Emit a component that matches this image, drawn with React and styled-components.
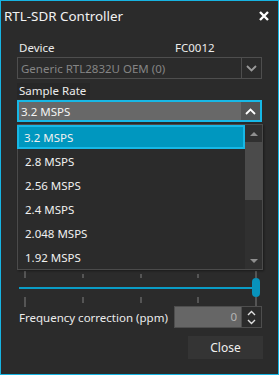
import React from "react"
import styled, { createGlobalStyle } from "styled-components"

const GlobalStyle = createGlobalStyle`
  html, body {
    margin: 0;
    padding: 0;
    background: #2b2b2b;
  }
  * { box-sizing: border-box; }
`;

const Window = styled.div`
  width: 279px;
  height: 375px;
  border: 1px solid #17b4e2;
  background: #2b2b2b;
  color: #ececec;
  font-family: "Noto Sans", "Open Sans", sans-serif;
  font-size: 11.5px;
  display: flex;
  flex-direction: column;
  white-space: nowrap;
`;

const TitleBar = styled.div`
  height: 30px;
  display: flex;
  align-items: center;
  justify-content: space-between;
  padding: 0 9px 0 3px;
`;

const Title = styled.div`
  font-size: 13.4px;
  color: #f2f2f2;
`;

const CloseIcon = styled.svg`
  width: 10px;
  height: 10px;
`;

const Content = styled.div`
  padding: 9px 16px 0 16px;
  display: flex;
  flex-direction: column;
`;

const LabelRow = styled.div`
  display: flex;
  height: 16px;
  line-height: 16px;
  margin-top: ${p => p.$gap || 0}px;
`;

const Label = styled.div`
  padding-left: 2px;
  width: ${p => p.$w ? p.$w + "px" : "auto"};
  background: ${p => p.$shade ? "#272727" : "transparent"};
  padding-right: ${p => p.$shade ? "4px" : "0"};
`;

const ComboWrap = styled.div`
  position: relative;
  margin-top: 1px;
`;

const Combo = styled.div`
  height: 22px;
  display: flex;
  border: ${p => p.$focus ? "2px solid #17b8e6" : "1px solid #4e4e4e"};
  background: ${p => p.$focus ? "#686868" : "transparent"};
`;

const ComboText = styled.div`
  flex: 1;
  display: flex;
  align-items: center;
  padding-left: ${p => p.$focus ? "2px" : "3px"};
  color: ${p => p.$focus ? "#f4f4f4" : "#858585"};
`;

const ComboButton = styled.div`
  width: ${p => p.$focus ? "19px" : "20px"};
  display: flex;
  align-items: center;
  justify-content: center;
  border-left: ${p => p.$focus ? "none" : "1px solid #4e4e4e"};
  background: ${p => p.$focus ? "#545454" : "transparent"};
`;

const Chevron = styled.svg`
  width: 11px;
  height: 7px;
`;

const List = styled.div`
  position: absolute;
  top: 24px;
  left: 0;
  width: 246px;
  height: 146px;
  border: 1px solid #4b4b4b;
  background: #2b2b2b;
  display: flex;
  z-index: 2;
  box-shadow: 1px 1px 2px rgba(0, 0, 0, 0.4);
`;

const Items = styled.div`
  flex: 1;
  display: flex;
  flex-direction: column;
`;

const Item = styled.div`
  height: 24px;
  display: flex;
  align-items: center;
  padding-left: ${p => p.$active ? "5px" : "7px"};
  border: ${p => p.$active ? "2px solid #17b8e6" : "none"};
  background: ${p => p.$active ? "#0097bf" : "transparent"};
  color: #f0f0f0;
  margin-left: ${p => p.$active ? "-1px" : "0"};
`;

const ScrollBar = styled.div`
  width: 17px;
  display: flex;
  flex-direction: column;
  background: #303030;
`;

const ScrollArrow = styled.div`
  height: 17px;
  display: flex;
  align-items: center;
  justify-content: center;
`;

const ScrollThumb = styled.div`
  height: 58px;
  background: #4b4b4b;
`;

const ScrollTrack = styled.div`
  flex: 1;
`;

const Triangle = styled.div`
  width: 0;
  height: 0;
  border-left: 4px solid transparent;
  border-right: 4px solid transparent;
  ${p => p.$down
    ? "border-top: 4px solid #8f8f8f;"
    : "border-bottom: 4px solid #8f8f8f;"}
`;

const HiddenArea = styled.div`
  height: 148px;
`;

const Slider = styled.div`
  display: flex;
  flex-direction: column;
`;

const TickRow = styled.div`
  height: ${p => p.$h}px;
  display: flex;
  justify-content: space-between;
  align-items: ${p => p.$top ? "flex-end" : "flex-start"};
  padding: 0 5px 0 7px;
`;

const Tick = styled.div`
  width: 2px;
  height: ${p => p.$h}px;
  background: #555555;
`;

const TrackRow = styled.div`
  height: 19px;
  display: flex;
  align-items: center;
  padding: 0 2px;
`;

const Track = styled.div`
  flex: 1;
  height: 2px;
  background: #0a9cc6;
  margin-right: -1px;
`;

const Thumb = styled.div`
  width: 8px;
  height: 19px;
  border-radius: 4px;
  background: #0893bc;
`;

const FieldRow = styled.div`
  display: flex;
  align-items: center;
  justify-content: space-between;
  height: 22px;
`;

const SpinBox = styled.div`
  width: 88px;
  height: 22px;
  display: flex;
  border: 1px solid #4e4e4e;
  background: #666666;
`;

const SpinValue = styled.div`
  flex: 1;
  text-align: right;
  padding-right: 4px;
  line-height: 20px;
  color: #b4b4b4;
`;

const SpinButtons = styled.div`
  width: 20px;
  border-left: 1px solid #4e4e4e;
  background: #2b2b2b;
  display: flex;
  flex-direction: column;
  align-items: center;
  justify-content: space-around;
  padding: 1px 0;
`;

const SpinIcon = styled.svg`
  width: 9px;
  height: 6px;
`;

const ButtonRow = styled.div`
  display: flex;
  justify-content: flex-end;
  margin-top: 8px;
  margin-right: -1px;
`;

const Button = styled.button`
  width: 75px;
  height: 23px;
  border: none;
  background: #343434;
  color: #f0f0f0;
  font-family: inherit;
  font-size: 12px;
  padding: 0;
`;

const ChevronDown = ({ color }) => (
  <Chevron viewBox="0 0 11 7">
    <polyline points="1,1 5.5,5.5 10,1" fill="none" stroke={color} strokeWidth="1.8" />
  </Chevron>
);

const ChevronUp = ({ color }) => (
  <Chevron viewBox="0 0 11 7">
    <polyline points="1,6 5.5,1.5 10,6" fill="none" stroke={color} strokeWidth="1.8" />
  </Chevron>
);

const rates = ["3.2 MSPS", "2.8 MSPS", "2.56 MSPS", "2.4 MSPS", "2.048 MSPS", "1.92 MSPS"];
const tickHeightsTop = [7, 4, 4, 4, 7];
const tickHeightsBottom = [10, 6, 6, 6, 10];

const App = () => {
  return (<>
    <GlobalStyle/>
    <Window>
      <TitleBar>
        <Title>RTL-SDR Controller</Title>
        <CloseIcon viewBox="0 0 10 10">
          <path d="M1 1 L9 9 M9 1 L1 9" stroke="#ffffff" strokeWidth="2.4" />
        </CloseIcon>
      </TitleBar>
      <Content>
        <LabelRow>
          <Label $w={156}>Device</Label>
          <Label>FC0012</Label>
        </LabelRow>
        <ComboWrap>
          <Combo>
            <ComboText>Generic RTL2832U OEM (0)</ComboText>
            <ComboButton><ChevronDown color="#9a9a9a"/></ComboButton>
          </Combo>
        </ComboWrap>
        <LabelRow $gap={4}>
          <Label $shade>Sample Rate</Label>
        </LabelRow>
        <ComboWrap>
          <Combo $focus>
            <ComboText $focus>3.2 MSPS</ComboText>
            <ComboButton $focus><ChevronUp color="#ffffff"/></ComboButton>
          </Combo>
          <List>
            <Items>
              {rates.map((r, i) => (
                <Item key={r} $active={i === 0}>{r}</Item>
              ))}
            </Items>
            <ScrollBar>
              <ScrollArrow><Triangle/></ScrollArrow>
              <ScrollThumb/>
              <ScrollTrack/>
              <ScrollArrow><Triangle $down/></ScrollArrow>
            </ScrollBar>
          </List>
        </ComboWrap>
        <HiddenArea/>
        <Slider>
          <TickRow $h={8} $top>
            {tickHeightsTop.map((h, i) => <Tick key={i} $h={h}/>)}
          </TickRow>
          <TrackRow>
            <Track/>
            <Thumb/>
          </TrackRow>
          <TickRow $h={9}>
            {tickHeightsBottom.map((h, i) => <Tick key={i} $h={h}/>)}
          </TickRow>
        </Slider>
        <FieldRow>
          <Label>Frequency correction (ppm)</Label>
          <SpinBox>
            <SpinValue>0</SpinValue>
            <SpinButtons>
              <SpinIcon viewBox="0 0 9 6">
                <polyline points="1,5 4.5,1.5 8,5" fill="none" stroke="#e0e0e0" strokeWidth="1.4" />
              </SpinIcon>
              <SpinIcon viewBox="0 0 9 6">
                <polyline points="1,1 4.5,4.5 8,1" fill="none" stroke="#e0e0e0" strokeWidth="1.4" />
              </SpinIcon>
            </SpinButtons>
          </SpinBox>
        </FieldRow>
        <ButtonRow>
          <Button>Close</Button>
        </ButtonRow>
      </Content>
    </Window>
  </>)
};

export default App
